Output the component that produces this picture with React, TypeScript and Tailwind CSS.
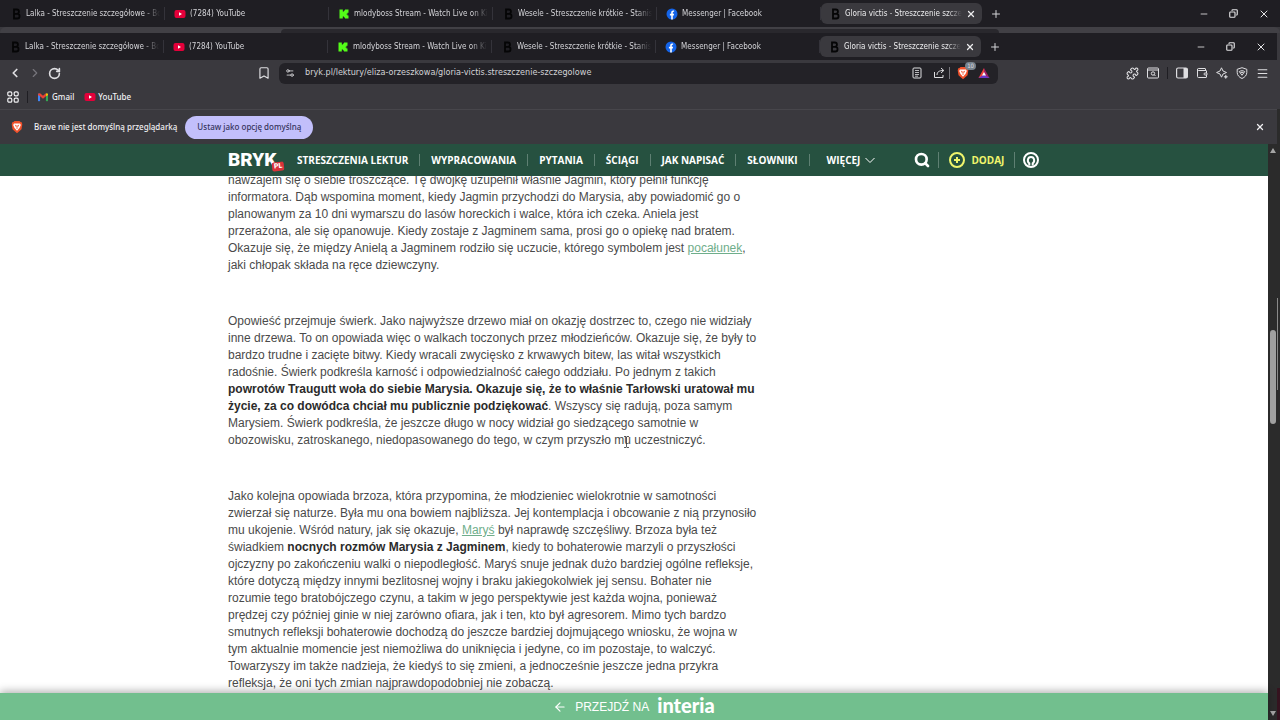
import React from 'react'
import {
  ArrowLeft, Bookmark, ChevronLeft, ChevronRight, Copy,
  Menu, Minus, Plus, Puzzle, RotateCw, Search, Settings2, Wallet, X,
} from 'lucide-react'

type Tab = { icon: string; title: string; active?: boolean }

const tabs: Tab[] = [
  { icon: 'bryk', title: 'Lalka - Streszczenie szczegółowe - Bo' },
  { icon: 'youtube', title: '(7284) YouTube' },
  { icon: 'kick', title: 'mlodyboss Stream - Watch Live on Ki' },
  { icon: 'bryk', title: 'Wesele - Streszczenie krótkie - Stanis' },
  { icon: 'facebook', title: 'Messenger | Facebook' },
  { icon: 'bryk', title: 'Gloria victis - Streszczenie szczeg', active: true },
]

const navItems = ['STRESZCZENIA LEKTUR', 'WYPRACOWANIA', 'PYTANIA', 'ŚCIĄGI', 'JAK NAPISAĆ', 'SŁOWNIKI']

const YoutubeIcon = () => (
  <svg viewBox="0 0 12 12" className="h-3 w-3 shrink-0">
    <rect x="0.5" y="2" width="11" height="8" rx="2" fill="#e4003a" />
    <path d="M5 4.2v3.6L8 6z" fill="#fff" />
  </svg>
)

const TabIcon = ({ name }: { name: string }) => {
  if (name === 'youtube') return <YoutubeIcon />
  if (name === 'kick') {
    return (
      <svg viewBox="0 0 12 12" className="h-3 w-3 shrink-0">
        <path d="M1.500 1.500h3.300v2H6v-1h1v-1h3.500v3.200h-1v1H8.600v.8h.9v1h1v3H7v-1H6v-1H4.800v2H1.500z" fill="#53fc18" />
      </svg>
    )
  }
  if (name === 'facebook') {
    return (
      <svg viewBox="0 0 12 12" className="h-3 w-3 shrink-0">
        <circle cx="6" cy="6" r="5.500" fill="#1464e8" />
        <path d="M5.200 11.400V7.400H3.900V5.700h1.300V4.600c0-1.500.8-2.200 2-2.200.5 0 .9.100.9.100v1.300h-.6c-.5 0-.7.300-.7.700v1.200h1.300l-.3 1.700h-1v4z" fill="#fff" />
      </svg>
    )
  }
  return (
    <svg viewBox="0 0 12 12" className="h-3 w-3 shrink-0">
      <path d="M4 1.500h2.800a2 2 0 0 1 0 4.300H4zM4 5.800h3.200a2.200 2.200 0 0 1 0 4.700H4z" fill="none" stroke="#050506" strokeWidth="1.800" />
    </svg>
  )
}

const TabStrip = () => (
  <div className="flex h-[27px] items-center bg-[#1f1e23] text-[#d4d4d8]">
    {tabs.map((tab) => (
      <div
        key={tab.title}
        className={
          tab.active
            ? 'flex h-[21px] w-[161px] items-center gap-1 rounded-md bg-[#3a393e] pl-2 pr-1.5 text-[#ececee]'
            : 'flex h-[13px] w-[164px] items-center gap-1 border-r border-[#34333a] pl-[9px] pr-1'
        }
      >
        <TabIcon name={tab.icon} />
        <a href="#" className="min-w-0 flex-1 overflow-hidden whitespace-nowrap [mask-image:linear-gradient(to_right,black_88%,transparent)]">
          {tab.title}
        </a>
        {tab.active && (
          <button aria-label="Zamknij kartę"><X size={10} strokeWidth={3} /></button>
        )}
      </div>
    ))}
    <button aria-label="Nowa karta" className="ml-2"><Plus size={12} /></button>
    <div className="ml-auto flex items-center gap-5 pr-2.5 text-[#e4e4e6]">
      <button aria-label="Minimalizuj"><Minus size={10} /></button>
      <button aria-label="Przywróć"><Copy size={9} className="-scale-x-100" strokeWidth={3} /></button>
      <button aria-label="Zamknij"><X size={12} /></button>
    </div>
  </div>
)

const BraveIcon = () => (
  <svg viewBox="0 0 14 14" className="h-3.5 w-3.5">
    <path d="M4.500 1h5l1 1 1.200.3.600 2-.8 4.900L7 13.300 2.500 9.200l-.8-4.900.6-2L3.500 2z" fill="#f0512b" />
    <path d="M4 3.500h6l.8 1.500L9.500 8 7 10.800 4.500 8 3.200 5z" fill="#fff" />
    <path d="M5.200 4.800l1 2M8.800 4.800l-1 2M7 5v4" stroke="#f0512b" strokeWidth=".8" />
  </svg>
)

const Toolbar = () => (
  <div className="flex h-[26px] items-center text-[#dedee1]">
    <div className="flex w-[279px] items-center gap-1.5 pl-2 pr-2">
      <button aria-label="Wstecz"><ChevronLeft size={14} strokeWidth={3} /></button>
      <button aria-label="Dalej" className="text-[#77767c]"><ChevronRight size={14} /></button>
      <button aria-label="Odśwież"><RotateCw size={13} strokeWidth={3} /></button>
      <button aria-label="Zakładka" className="ml-auto"><Bookmark size={14} /></button>
    </div>
    <div className="flex h-[21px] min-w-0 flex-1 items-center rounded-md bg-[#232227] pl-1.5 pr-2">
      <Settings2 size={10} />
      <input
        aria-label="Adres"
        className="ml-2.5 min-w-0 flex-1 bg-transparent text-[9px] text-[#d2d2d6] outline-none"
        defaultValue="bryk.pl/lektury/eliza-orzeszkowa/gloria-victis.streszczenie-szczegolowe"
      />
      <div className="flex items-center">
        <button aria-label="Tryb czytania">
          <svg viewBox="0 0 12 12" className="h-3 w-3" fill="none" stroke="currentColor">
            <rect x="2" y="1" width="8" height="10" rx="1" />
            <path d="M4 3.500h4M4 5.500h4M4 7.500h4M4 9.200h3" strokeWidth=".8" />
          </svg>
        </button>
        <button aria-label="Udostępnij" className="ml-2.5 border-r border-[#77767c] pr-1">
          <svg viewBox="0 0 12 12" className="h-3 w-3" fill="none" stroke="currentColor">
            <path d="M1.500 5v5.500h8.500V8M4 8c0-3 2-4.500 6.500-4.500M8 1l2.800 2.500L8 6" />
          </svg>
        </button>
        <button aria-label="Brave Shields" className="relative ml-1.5">
          <BraveIcon />
          <span className="absolute -right-1.5 -top-1 rounded-full bg-[#77828c] px-0.5 text-[6px] leading-[8px]">10</span>
        </button>
        <button aria-label="Nagrody" className="ml-2">
          <svg viewBox="0 0 12 12" className="h-3 w-3">
            <path d="M6 1L.5 11h5.500z" fill="#f0413a" />
            <path d="M6 1l5.500 10H6z" fill="#9e1f63" />
            <path d="M.5 11h11L6 7.500z" fill="#6b36c9" />
            <path d="M6 5L4 8.500h4z" fill="#fff" />
          </svg>
        </button>
      </div>
    </div>
    <div className="flex w-[279px] items-center justify-end gap-2 pr-2">
      <button aria-label="Rozszerzenia"><Puzzle size={13} /></button>
      <button aria-label="Szukaj na kartach">
        <svg viewBox="0 0 12 12" className="h-3 w-3" fill="none" stroke="currentColor">
          <rect x="0.500" y="1" width="11" height="10" rx="1" />
          <path d="M.5 3h11" />
          <circle cx="6" cy="6.500" r="1.700" />
          <path d="M7 7.500l1.500 1.500" />
        </svg>
      </button>
      <div className="h-3 w-px bg-[#1f1e23]" />
      <button aria-label="Panel boczny">
        <svg viewBox="0 0 12 12" className="h-3 w-3">
          <rect x="0.600" y="1" width="10.800" height="10" rx="1.500" fill="none" stroke="currentColor" strokeWidth="1.200" />
          <path d="M7.500 1H10a1.500 1.500 0 0 1 1.500 1.500v7A1.500 1.500 0 0 1 10 11H7.500z" fill="currentColor" />
        </svg>
      </button>
      <button aria-label="Portfel"><Wallet size={12} /></button>
      <button aria-label="Leo">
        <svg viewBox="0 0 12 12" className="h-3 w-3" fill="none" stroke="currentColor" strokeLinejoin="round">
          <path d="M5.500.8L7 4l3.500 1.500L7 7l-1.500 3.200L4 7 .6 5.500 4 4z" />
          <path d="M9.800 7.800l.6 1.400 1.300.6-1.300.6-.6 1.300-.6-1.300-1.300-.6 1.300-.6z" fill="currentColor" strokeWidth=".4" />
        </svg>
      </button>
      <button aria-label="VPN">
        <svg viewBox="0 0 12 12" className="h-3 w-3" fill="none" stroke="currentColor" strokeLinejoin="round">
          <path d="M6 .7l4.800 1.600v3.200c0 2.800-2 4.800-4.800 6-2.800-1.200-4.800-3.200-4.800-6V2.300z" />
          <path d="M3.300 4.600c1.600-1.200 3.800-1.200 5.400 0L6 8.300z" />
          <path d="M4.600 5.400h2.800" />
        </svg>
      </button>
      <button aria-label="Menu"><Menu size={13} /></button>
    </div>
  </div>
)

const Bookmarks = () => (
  <div className="flex h-[23px] items-center pb-0.5 pl-[7px] font-['Noto_Sans',sans-serif] font-medium text-[#f0f0f2]">
    <button aria-label="Wszystkie zakładki">
      <svg viewBox="0 0 12 12" className="h-3 w-3" fill="none" stroke="currentColor" strokeWidth="1.200">
        <rect x="0.800" y="0.800" width="4" height="4" rx="1.300" />
        <rect x="7.200" y="0.800" width="4" height="4" rx="1.300" />
        <rect x="0.800" y="7.200" width="4" height="4" rx="1.300" />
        <rect x="7.200" y="7.200" width="4" height="4" rx="1.300" />
      </svg>
    </button>
    <div className="ml-2 h-3 w-px bg-[#1f1e23]" />
    <a href="#" className="ml-2.5 flex items-center gap-1">
      <svg viewBox="0 0 12 12" className="h-[10px] w-[10px]">
        <path d="M0 2h2.500v9H0z" fill="#4285f4" />
        <path d="M9.500 2H12v9H9.500z" fill="#34a853" />
        <path d="M0 2l2.500-.500L6 4.500l3.500-3V5L6 8 2.500 5 0 3.500z" fill="#ea4335" />
        <path d="M9.500 1.500L12 2v2L9.500 5z" fill="#fbbc04" />
      </svg>
      Gmail
    </a>
    <a href="#" className="ml-2.5 flex items-center gap-0.5">
      <YoutubeIcon />
      YouTube
    </a>
  </div>
)

const InfoBar = () => (
  <div className="flex h-[35px] items-center border-t border-[#47464b] pl-2.5 pr-3 font-['Noto_Sans',sans-serif] font-medium text-[#f0f0f2]">
    <BraveIcon />
    <p className="ml-2.5">Brave nie jest domyślną przeglądarką</p>
    <button className="ml-2 h-[23px] rounded-full bg-[#c2bffb] px-3 text-[#35345c]">
      Ustaw jako opcję domyślną
    </button>
    <button aria-label="Zamknij pasek" className="ml-auto"><X size={10} strokeWidth={3} /></button>
  </div>
)

const SiteHeader = () => (
  <header className="flex h-8 shrink-0 items-center bg-[#265140] pl-[228px] font-['Open_Sans',sans-serif] text-[10px] font-bold text-white">
    <a href="#" className="flex h-full w-[58px] items-center font-['Roboto',sans-serif] text-[19px] font-black">
      BRYK
      <span className="mt-3 -ml-1 -rotate-6 rounded-xs bg-[#d8333a] px-0.5 text-[7px] leading-[9px]">PL</span>
    </a>
    <nav className="flex items-center">
      {navItems.map((item) => (
        <a key={item} href="#" className="border-r border-[#5f8073] px-[11px] leading-[12px] whitespace-nowrap">{item}</a>
      ))}
      <button className="flex items-center gap-1 pl-[17px]">
        WIĘCEJ
        <svg viewBox="0 0 12 12" className="h-3 w-3" fill="none" stroke="currentColor">
          <path d="M1.500 4L6 8.500 10.500 4" />
        </svg>
      </button>
    </nav>
    <div className="flex items-center pl-[38px]">
      <button aria-label="Szukaj" className="border-r border-[#5f8073] pr-2"><Search size={16} strokeWidth={4} /></button>
      <a href="#" className="flex items-center gap-1.5 border-r border-[#5f8073] px-2.5 leading-[12px] text-[#f0f56c]">
        <svg viewBox="0 0 16 16" className="h-4 w-4" fill="none" stroke="currentColor" strokeWidth="2">
          <circle cx="8" cy="8" r="7" />
          <path d="M8 5v6M5 8h6" />
        </svg>
        DODAJ
      </a>
      <button aria-label="Konto" className="ml-2">
        <svg viewBox="0 0 16 16" className="h-4 w-4" fill="none" stroke="#fff">
          <circle cx="8" cy="8" r="7" strokeWidth="2" />
          <path d="M6.300 13.500v-2.200C4 9.800 4.300 5 8 5s4 4.800 1.700 6.300v2.200" strokeWidth="2" />
        </svg>
      </button>
    </div>
  </header>
)

const Article = () => (
  <article className="-mt-1 flex flex-col gap-[39px] pl-[228px] text-[12px] leading-[17px] whitespace-nowrap text-[#4a4a4a]">
    <p>
      nawzajem się o siebie troszczące. Tę dwójkę uzupełnił właśnie Jagmin, który pełnił funkcję<br />
      informatora. Dąb wspomina moment, kiedy Jagmin przychodzi do Marysia, aby powiadomić go o<br />
      planowanym za 10 dni wymarszu do lasów horeckich i walce, która ich czeka. Aniela jest<br />
      przerażona, ale się opanowuje. Kiedy zostaje z Jagminem sama, prosi go o opiekę nad bratem.<br />
      Okazuje się, że między Anielą a Jagminem rodziło się uczucie, którego symbolem jest <a href="#" className="text-[#6fae8b] underline">pocałunek</a>,<br />
      jaki chłopak składa na ręce dziewczyny.
    </p>
    <p>
      Opowieść przejmuje świerk. Jako najwyższe drzewo miał on okazję dostrzec to, czego nie widziały<br />
      inne drzewa. To on opowiada więc o walkach toczonych przez młodzieńców. Okazuje się, że były to<br />
      bardzo trudne i zacięte bitwy. Kiedy wracali zwycięsko z krwawych bitew, las witał wszystkich<br />
      radośnie. Świerk podkreśla karność i odpowiedzialność całego oddziału. Po jednym z takich<br />
      <b className="text-[#2b2b2b]">powrotów Traugutt woła do siebie Marysia. Okazuje się, że to właśnie Tarłowski uratował mu<br />
      życie, za co dowódca chciał mu publicznie podziękować</b>. Wszyscy się radują, poza samym<br />
      Marysiem. Świerk podkreśla, że jeszcze długo w nocy widział go siedzącego samotnie w<br />
      obozowisku, zatroskanego, niedopasowanego do tego, w czym przyszło mu uczestniczyć.
    </p>
    <p>
      Jako kolejna opowiada brzoza, która przypomina, że młodzieniec wielokrotnie w samotności<br />
      zwierzał się naturze. Była mu ona bowiem najbliższa. Jej kontemplacja i obcowanie z nią przynosiło<br />
      mu ukojenie. Wśród natury, jak się okazuje, <a href="#" className="text-[#6fae8b] underline">Maryś</a> był naprawdę szczęśliwy. Brzoza była też<br />
      świadkiem <b className="text-[#2b2b2b]">nocnych rozmów Marysia z Jagminem</b>, kiedy to bohaterowie marzyli o przyszłości<br />
      ojczyzny po zakończeniu walki o niepodległość. Maryś snuje jednak dużo bardziej ogólne refleksje,<br />
      które dotyczą między innymi bezlitosnej wojny i braku jakiegokolwiek jej sensu. Bohater nie<br />
      rozumie tego bratobójczego czynu, a takim w jego perspektywie jest każda wojna, ponieważ<br />
      prędzej czy później ginie w niej zarówno ofiara, jak i ten, kto był agresorem. Mimo tych bardzo<br />
      smutnych refleksji bohaterowie dochodzą do jeszcze bardziej dojmującego wniosku, że wojna w<br />
      tym aktualnie momencie jest niemożliwa do uniknięcia i jedyne, co im pozostaje, to walczyć.<br />
      Towarzyszy im także nadzieja, że kiedyś to się zmieni, a jednocześnie jeszcze jedna przykra<br />
      refleksja, że oni tych zmian najprawdopodobniej nie zobaczą.
    </p>
  </article>
)

const App = () => {
  return (
    <div className="flex h-screen flex-col overflow-hidden bg-[#3a393e] font-['DejaVu_Sans_Condensed','Noto_Sans',sans-serif] text-[8px]">
      <div className="bg-[#1f1e23] pl-px"><TabStrip /></div>
      <div className="h-1.5 rounded-t-md bg-[#414045] pt-0.5">
        <div className="mx-[281px] h-1 rounded-t bg-[#29282d]" />
      </div>
      <div className="flex min-h-0 flex-1">
        <div className="flex min-w-0 flex-1 flex-col">
          <TabStrip />
          <Toolbar />
          <Bookmarks />
          <InfoBar />
          <div className="flex min-h-0 flex-1">
            <main className="relative flex min-w-0 flex-1 flex-col bg-white font-['Liberation_Sans',sans-serif]">
              <SiteHeader />
              <div className="min-h-0 flex-1 overflow-hidden">
                <Article />
              </div>
              {/* text cursor */}
              <svg viewBox="0 0 7 12" className="absolute left-[623px] top-[292px] h-3 w-[7px]" fill="none" stroke="#333">
                <path d="M1 .5h2l.5.500.500-.500h2M3.500 1v10M1 11.500h2l.500-.500.500.500h2" strokeWidth=".8" />
              </svg>
              <a href="#" className="z-10 flex h-[27px] shrink-0 items-center justify-center gap-2 bg-[#72bf8e] text-[12px] text-white shadow-[0_-2px_8px_rgba(0,0,0,0.3)]">
                <ArrowLeft size={14} />
                PRZEJDŹ NA
                <span className="pb-1 font-['Lato',sans-serif] text-[20px] leading-[20px] font-black">interia</span>
              </a>
            </main>
            <div className="flex w-[9px] flex-col items-center bg-[#2b2b2b] py-1">
              <svg viewBox="0 0 6 5" className="h-[5px] w-[6px]"><path d="M3 0l3 5H0z" fill="#a5a5a5" /></svg>
              <div className="mt-[177px] mb-auto h-[94px] w-1.5 rounded-full bg-[#a0a0a0]" />
              <svg viewBox="0 0 6 5" className="h-[5px] w-[6px]"><path d="M3 5l3-5H0z" fill="#a5a5a5" /></svg>
            </div>
          </div>
        </div>
        <div className="flex w-[3px] flex-col bg-[#2b2b2b]">
          <div className="h-[76px] bg-[#3a393e]" />
          <div className="mt-[189px] h-[92px] w-px bg-[#8a8a8a]" />
          <div className="mt-auto h-8 bg-[#35131f]" />
        </div>
      </div>
    </div>
  )
}

export default App
